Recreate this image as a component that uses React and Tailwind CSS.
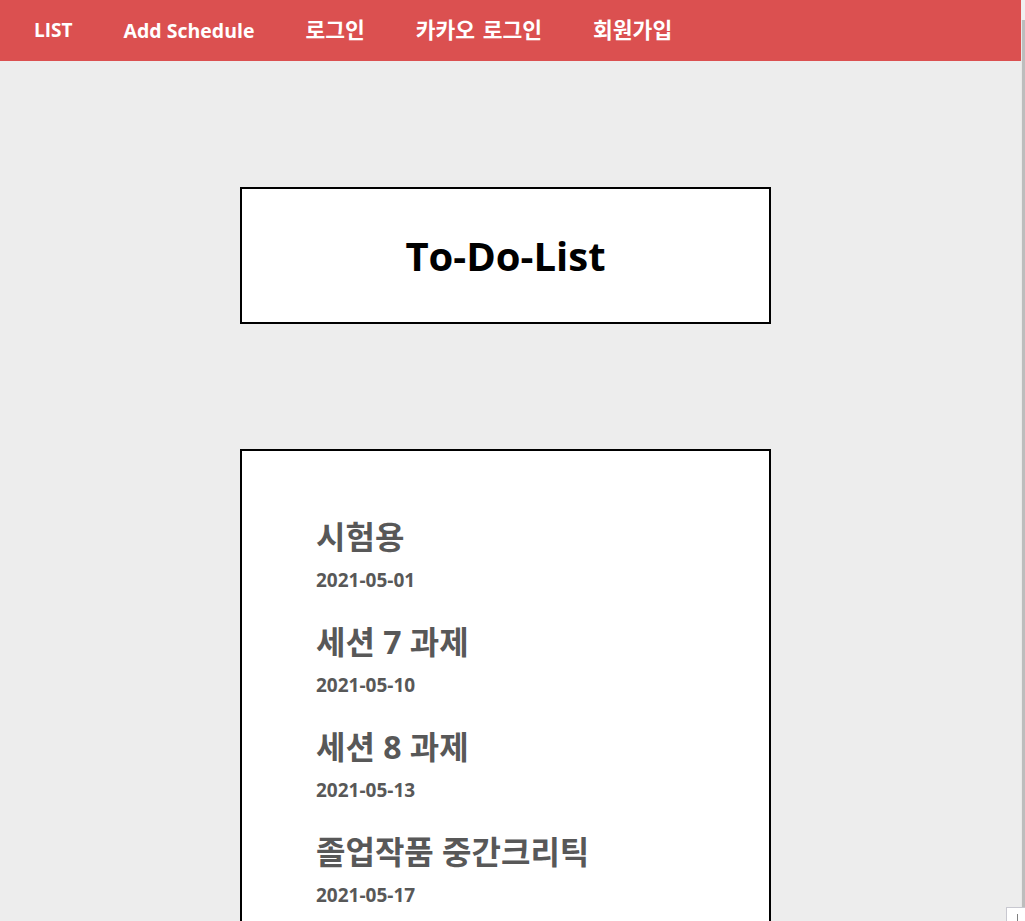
import React from "react";

const items = [
  { title: "시험용", date: "2021-05-01" },
  { title: "세션 7 과제", date: "2021-05-10" },
  { title: "세션 8 과제", date: "2021-05-13" },
  { title: "졸업작품 중간크리틱", date: "2021-05-17" },
];

const font = { fontFamily: '"Open Sans", "Noto Sans CJK KR", sans-serif' };

export default function App() {
  return (
    <div className="relative w-[1025px] h-[921px] overflow-hidden bg-[#ededed] flex" style={font}>
      <div className="w-[1021px] flex flex-col">
        <header className="h-[61px] bg-[#db5050] flex items-center pl-[34px] gap-[51px] text-white font-bold shrink-0">
          <span className="text-[19px]">LIST</span>
          <span className="text-[19.5px]">Add Schedule</span>
          <span className="text-[21.5px]">로그인</span>
          <span className="text-[21.5px] [word-spacing:2px]">카카오 로그인</span>
          <span className="text-[21.5px]">회원가입</span>
        </header>
        <div className="ml-[240px] mt-[126px] w-[531px] h-[137px] border-2 border-black bg-white flex items-center justify-center shrink-0">
          <h1 className="text-[40px] font-bold text-black leading-none">To-Do-List</h1>
        </div>
        <div className="ml-[240px] mt-[125px] w-[531px] border-2 border-black bg-white pl-[74px] pt-[68px] pb-[40px] shrink-0">
          {items.map((it) => (
            <div key={it.date} className="mb-[32px]">
              <div className="text-[32px] leading-[36px] font-bold text-[#585858]">{it.title}</div>
              <div className="mt-[13px] text-[19px] leading-[24px] font-bold text-[#585858]">{it.date}</div>
            </div>
          ))}
        </div>
      </div>
      <div className="w-[4px] flex flex-col">
        <div className="h-[20px] bg-[#f0f0f0]" />
        <div className="flex-1 bg-[#bdbdbd] border-l border-[#e8e8e8]" />
      </div>
      <div className="absolute left-[1006px] top-[907px] w-[19px] h-[14px] bg-white border border-[#c8c8d0] border-r-0 border-b-0">
        <div className="absolute left-[10px] top-[6px] w-[1px] h-[8px] bg-[#808080]" />
      </div>
    </div>
  );
}
